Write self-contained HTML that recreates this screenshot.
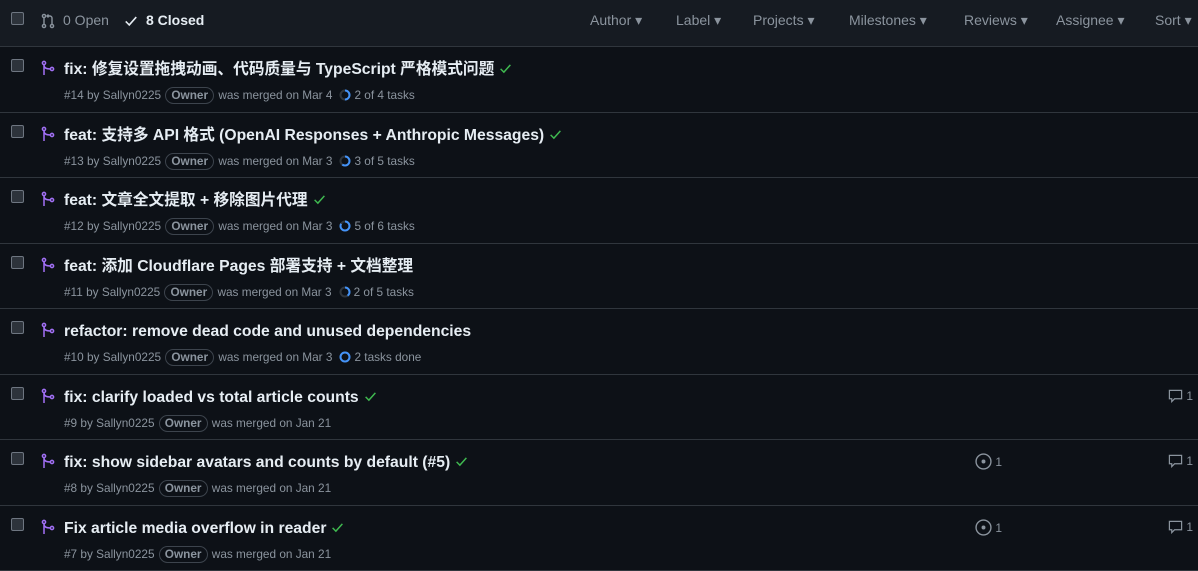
<!DOCTYPE html>
<html><head><meta charset="utf-8"><style>
body{margin:0;width:1198px;height:568px;overflow:hidden;background:#0d1117;font-family:"Liberation Sans","Noto Sans CJK SC",sans-serif;color:#e6edf3}
.hdr{height:46px;background:#161b22;border-bottom:1px solid #30363d;position:relative;font-size:14px}
.cb{position:absolute;width:11px;height:11px;border:1px solid #6e7681;background:#2d333b;border-radius:2px}
.hdr .t{position:absolute;top:12px;color:#8b949e;line-height:16px}
.row{height:64.5px;border-bottom:1px solid #30363d;position:relative}
.title{position:absolute;left:64px;top:13px;font-size:15.7px;line-height:20px;height:20px;font-weight:bold;color:#e6edf3;white-space:nowrap}
.chk{display:inline-block;vertical-align:-1px;margin-left:5px}
.meta{position:absolute;left:64px;top:39px;font-size:11.8px;line-height:18px;color:#8b949e;white-space:nowrap}
.own{display:inline-block;border:1px solid #3d444d;border-radius:10px;padding:0 5px;line-height:15px;font-weight:bold;color:#8b949e;margin:0 1px}
.pr{position:absolute;left:40px;top:13px}
.ring{display:inline-block;vertical-align:-2px;margin:0 3px 0 7px}
.ic{position:absolute;top:13px;font-size:12px;color:#8b949e;line-height:16px}
</style></head><body>
<div class="hdr">
<div class="cb" style="left:11px;top:12px"></div>
<svg style="position:absolute;left:40px;top:13px" width="16" height="16" viewBox="0 0 16 16" fill="none" stroke="#8b949e" stroke-width="1.4"><circle cx="4" cy="3" r="1.6"/><circle cx="4" cy="13" r="1.6"/><circle cx="12" cy="13" r="1.6"/><path d="M4 5v6M12 11V5c0-1-1-2-2-2H7M8.5 1.5 7 3l1.5 1.5"/></svg>
<span class="t" style="left:63px">0 Open</span>
<svg style="position:absolute;left:124px;top:14px" width="14" height="14" viewBox="0 0 16 16"><path d="M2 8.5l4 4 8-9" stroke="#e6edf3" stroke-width="1.8" fill="none"/></svg>
<span class="t" style="left:146px;color:#e6edf3;font-weight:bold">8 Closed</span>
<span class="t" style="left:590px">Author ▾</span>
<span class="t" style="left:676px">Label ▾</span>
<span class="t" style="left:753px">Projects ▾</span>
<span class="t" style="left:849px">Milestones ▾</span>
<span class="t" style="left:964px">Reviews ▾</span>
<span class="t" style="left:1056px">Assignee ▾</span>
<span class="t" style="left:1155px">Sort ▾</span>
</div>
<div id="rows"></div>
<script>
const merge='<svg class="pr" width="16" height="16" viewBox="0 0 16 16" fill="none" stroke="#a371f7" stroke-width="1.5"><circle cx="4" cy="3" r="1.6"/><circle cx="12" cy="9" r="1.6"/><path d="M4 4.6V15M4 5c0 3 3 4 6.4 4"/></svg>';
const chk='<svg class="chk" width="13" height="13" viewBox="0 0 16 16"><path d="M2 8.5l4 4 8-9" stroke="#3fb950" stroke-width="1.8" fill="none"/></svg>';
const d=[["fix: 修复设置拖拽动画、代码质量与 TypeScript 严格模式问题",1,14,"Mar 4","2 of 4 tasks",0.5,0,0],
["feat: 支持多 API 格式 (OpenAI Responses + Anthropic Messages)",1,13,"Mar 3","3 of 5 tasks",0.6,0,0],
["feat: 文章全文提取 + 移除图片代理",1,12,"Mar 3","5 of 6 tasks",0.83,0,0],
["feat: 添加 Cloudflare Pages 部署支持 + 文档整理",0,11,"Mar 3","2 of 5 tasks",0.4,0,0],
["refactor: remove dead code and unused dependencies",0,10,"Mar 3","2 tasks done",1,0,0],
["fix: clarify loaded vs total article counts",1,9,"Jan 21","",0,0,1],
["fix: show sidebar avatars and counts by default (#5)",1,8,"Jan 21","",0,1,1],
["Fix article media overflow in reader",1,7,"Jan 21","",0,1,1]];
let h='';
for(const r of d){
 let ring='';
 if(r[4]){const c=2*Math.PI*4.5;ring=`<svg class="ring" width="12" height="12" viewBox="0 0 12 12"><circle cx="6" cy="6" r="4.5" fill="none" stroke="#30363d" stroke-width="2"/><circle cx="6" cy="6" r="4.5" fill="none" stroke="#4493f8" stroke-width="2" stroke-dasharray="${c*r[5]} ${c}" transform="rotate(-90 6 6)"/></svg>${r[4]}`;}
 h+=`<div class="row"><div class="cb" style="left:11px;top:12px"></div>${merge}<div class="title">${r[0]}${r[1]?chk:''}</div><div class="meta">#${r[2]} by Sallyn0225 <span class="own">Owner</span> was merged on ${r[3]}${ring}</div>`+
 (r[6]?`<div class="ic" style="left:975px"><svg width="17" height="17" viewBox="0 0 16 16" style="vertical-align:-4px" fill="none" stroke="#8b949e" stroke-width="1.3"><circle cx="8" cy="8" r="7"/><circle cx="8" cy="8" r="1.2" fill="#8b949e"/></svg> 1</div>`:'')+
 (r[7]?`<div class="ic" style="left:1168px"><svg width="15" height="15" viewBox="0 0 16 16" style="vertical-align:-3px" fill="none" stroke="#8b949e" stroke-width="1.3"><path d="M1.5 2.5h13v9H7l-3 3v-3H1.5z"/></svg> 1</div>`:'')+`</div>`;
}
document.getElementById('rows').innerHTML=h;
</script>
</body></html>
